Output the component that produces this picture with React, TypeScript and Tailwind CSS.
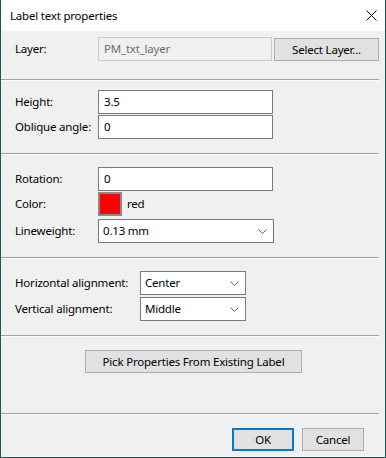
import { ReactNode } from 'react'

const font = "font-['Segoe_UI','Noto_Sans',sans-serif]"

function Separator() {
  return (
    <div className="w-[378px]">
      <div className="h-px bg-[#a0a0a0]" />
      <div className="h-px bg-white" />
    </div>
  )
}

function Chevron() {
  return (
    <svg width="9" height="5" viewBox="0 0 9 5" className="shrink-0">
      <path d="M0.5 0.5 L4.5 4.5 L8.5 0.5" fill="none" stroke="#606060" strokeWidth="1" />
    </svg>
  )
}

function TextBox({ value, w }: { value: string; w: string }) {
  return (
    <div className={`${w} h-[24px] bg-white border border-[#7a7a7a] flex items-center pl-[5px] text-black`}>
      {value}
    </div>
  )
}

function Dropdown({ value, w }: { value: string; w: string }) {
  return (
    <div className={`${w} h-[24px] bg-white border border-[#7a7a7a] flex items-center justify-between pl-[4px] pr-[6px] text-black`}>
      <span>{value}</span>
      <Chevron />
    </div>
  )
}

function Row({ label, labelW, children, className = '' }: { label: string; labelW: string; children: ReactNode; className?: string }) {
  return (
    <div className={`flex items-center pl-[14px] ${className}`}>
      <div className={`${labelW} shrink-0 text-black`}>{label}</div>
      {children}
    </div>
  )
}

export default function App() {
  return (
    <div className={`w-[386px] h-[458px] bg-[#f0f0f0] border-l border-r border-b border-[#1d5656] flex flex-col text-[11.5px] tracking-[-0.2px] leading-none ${font}`}>
      {/* TITLE BAR */}
      <div className="h-[31px] bg-white flex items-center justify-between pl-[9px] pr-[8px] shrink-0">
        <span className="text-black">Label text properties</span>
        <svg width="11" height="11" viewBox="0 0 11 11">
          <path d="M0.5 0.5 L10.5 10.5 M10.5 0.5 L0.5 10.5" stroke="#000" strokeWidth="1" />
        </svg>
      </div>

      {/* LAYER */}
      <div className="pt-[6px] pb-[18px]">
        <Row label="Layer:" labelW="w-[83px]" className="h-[24px]">
          <div className="w-[174px] h-[24px] bg-[#f0f0f0] border border-[#cccccc] flex items-center pl-[5px] text-[#6d6d6d]">
            PM_txt_layer
          </div>
          <button className="ml-[2px] mt-[1px] w-[105px] h-[23px] bg-[#e1e1e1] border border-[#adadad] text-black">
            Select Layer...
          </button>
        </Row>
      </div>
      <Separator />

      {/* HEIGHT / OBLIQUE */}
      <div className="pt-[9px] pb-[14px] flex flex-col gap-[1px]">
        <Row label="Height:" labelW="w-[83px]">
          <TextBox value="3.5" w="w-[175px]" />
        </Row>
        <Row label="Oblique angle:" labelW="w-[83px]">
          <TextBox value="0" w="w-[175px]" />
        </Row>
      </div>
      <Separator />

      {/* ROTATION / COLOR / LINEWEIGHT */}
      <div className="pt-[12px] pb-[14px] flex flex-col">
        <Row label="Rotation:" labelW="w-[83px]">
          <TextBox value="0" w="w-[175px]" />
        </Row>
        <Row label="Color:" labelW="w-[83px]" className="mt-[1px]">
          <div className="w-[24px] h-[24px] border-[2px] border-[#8a8a8a] bg-[#ff0000]" />
          <span className="ml-[5px] text-black">red</span>
        </Row>
        <Row label="Lineweight:" labelW="w-[83px]" className="mt-[3px]">
          <Dropdown value="0.13 mm" w="w-[176px]" />
        </Row>
      </div>
      <Separator />

      {/* ALIGNMENT */}
      <div className="pt-[12px] pb-[14px] flex flex-col gap-[2px]">
        <Row label="Horizontal alignment:" labelW="w-[125px]">
          <Dropdown value="Center" w="w-[106px]" />
        </Row>
        <Row label="Vertical alignment:" labelW="w-[125px]">
          <Dropdown value="Middle" w="w-[106px]" />
        </Row>
      </div>
      <Separator />

      {/* PICK */}
      <div className="pt-[13px] pb-[40px] pl-[84px]">
        <button className="w-[217px] h-[23px] bg-[#e1e1e1] border border-[#adadad] text-black">
          Pick Properties From Existing Label
        </button>
      </div>
      <Separator />

      {/* FOOTER */}
      <div className="pt-[13px] pl-[231px] flex gap-[8px]">
        <button className="w-[62px] h-[23px] bg-[#e1e1e1] border-2 border-[#0078d7] text-black">OK</button>
        <button className="w-[62px] h-[23px] bg-[#e1e1e1] border border-[#adadad] text-black">Cancel</button>
      </div>
    </div>
  )
}
